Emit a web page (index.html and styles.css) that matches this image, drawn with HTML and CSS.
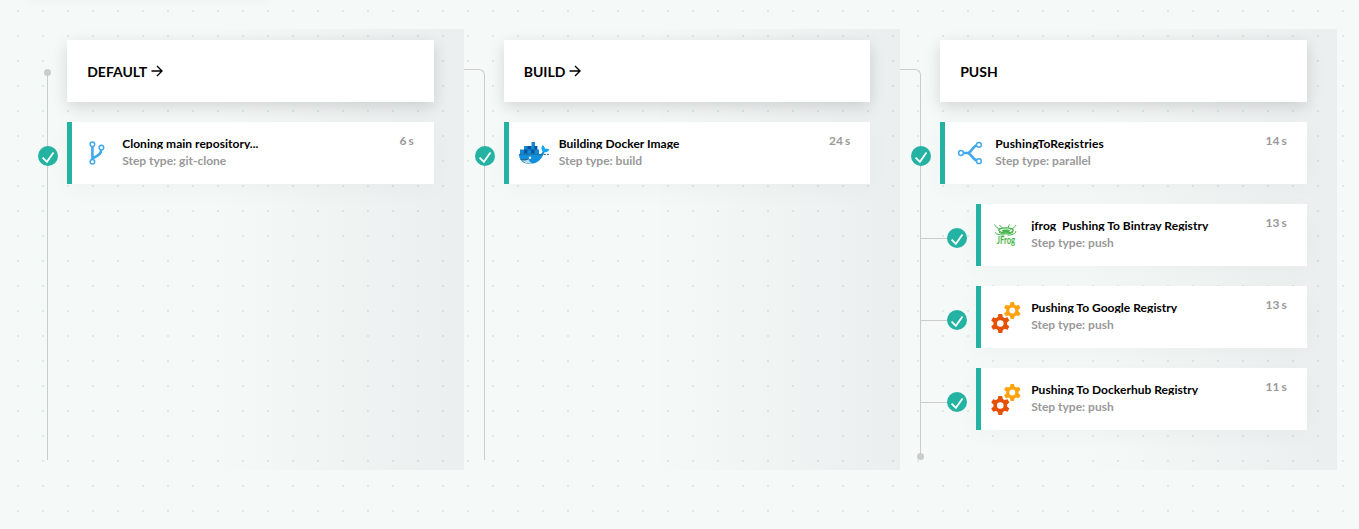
FILE: index.html
```html
<!DOCTYPE html>
<html lang="en">
<head>
<meta charset="utf-8">
<title>Pipeline</title>
<link rel="stylesheet" href="styles.css">
</head>
<body>
<svg class="sprite" aria-hidden="true">
  <symbol id="check" viewBox="0 0 20 20"><circle cx="10" cy="10" r="10" fill="#24b3a3"/><path d="M4.600 11.600l4.300 4.200L15.500 6.600" fill="none" stroke="#fff" stroke-width="1.800"/></symbol>
  <symbol id="arrow" viewBox="0 0 12 12"><path d="M.5 6h10M6 1l5 5-5 5" fill="none" stroke="#000" stroke-width="1.4"/></symbol>
  <symbol id="git" viewBox="0 0 32 32"><g fill="none" stroke="#42a9ee"><path d="M11.400 9.500v13M20.200 13c-.3 5-4 5.500-8.600 8.600" stroke-width="2.600"/><g stroke-width="1.500" fill="#fff"><circle cx="11.400" cy="7.300" r="2.300"/><circle cx="11.400" cy="24.700" r="2.300"/><circle cx="20.400" cy="10.600" r="2.300"/></g></g></symbol>
  <symbol id="parallel" viewBox="0 0 32 32"><g fill="none" stroke="#42a9ee"><path d="M9 16h5M24 8c-6 1-6.500 8-10.500 8 4 0 4.500 7 10.500 8" stroke-width="2.500"/><g stroke-width="1.500" fill="#fff"><circle cx="7" cy="16" r="2.400"/><circle cx="24.900" cy="7.800" r="2.400"/><circle cx="24.900" cy="24.200" r="2.400"/></g></g></symbol>
  <symbol id="docker" viewBox="0 0 32 32">
    <path d="M1 17h22c1.200-.6 1.500-2 1.700-3.200-1.500-1.500-1.300-4-.2-5.700 1.700 1.200 2.400 2.600 2.300 3.900 1.500-.5 3.100-.2 4.200.3-.8 2-2.500 2.700-4.700 2.800C24.300 22 19.500 27 12 27 5 27 1 23 1 17z" fill="#0f8fdc"/>
    <path d="M24.500 9.100c1.700 1.200 2.400 2.600 2.300 3.400 1.500-.5 3.100-.2 4.200.3-.8 2-2.500 2.700-4.700 2.800l-1.600-1.300c-1.500-1.500-1.300-3.500-.2-5.200z" fill="#12a9f5"/>
    <path d="M2 12.500h19V17H2zM6 9h13.500v3.500H6zM13.500 5H17v4h-3.500z" fill="#1488d0"/>
    <path d="M6 12.500h3.500v4H6zM13 12.500h3.500v4H13zM9.500 9H13v3.500H9.500zM16.500 9H19v3.500h-2.500z" fill="#07569d"/>
    <path d="M1 17.400h30" stroke="#2b688c" stroke-width="1" stroke-dasharray="2.500 1"/>
    <path d="M3.500 23c3 .6 5.500.3 7.500-1-.2 2.500 1.500 3.800 4.300 4.400-5 .8-9.200-.3-11.800-3.400z" fill="#bcd9e8"/>
    <path d="M2.500 22.500c3 .8 6.500.4 9-1.200" fill="none" stroke="#315a73" stroke-width="1"/>
    <circle cx="12" cy="20.700" r="1.300" fill="#e8f4fa"/>
  </symbol>
  <symbol id="frog" viewBox="0 0 32 32">
    <g fill="none" stroke="#43b649" stroke-width="1"><path d="M4.500 5.500c1.500 2.500 3 4 6 4.700M26 6c-1.500 2.500-3 3.800-6 4.200M9.500 6l2.500 2.800M19.500 5.500L18 8.500"/><ellipse cx="16" cy="11.300" rx="7.200" ry="2.500" stroke-width="1.300"/><path d="M9 13.300c3 2.200 11 2.200 14 0M5.500 13c-1.500 1.500 4 3.200 9 3M25.500 12c1.500 2-3 4-8 4.200"/></g>
    <path d="M11.500 11.500c2-1.500 7-1.500 9 0-1.500 2.500-7.500 2.500-9 0z" fill="#43b649"/>
    <text x="6.800" y="25" class="frog-word" textLength="18.200" lengthAdjust="spacingAndGlyphs">JFrog</text>
  </symbol>
  <symbol id="gear" viewBox="-10 -10 20 20">
    <circle r="5.100" fill="none" stroke="currentColor" stroke-width="3.600"/>
    <g fill="currentColor"><path id="teeth" d="M-2.600-6L-1.900-9.400H1.900L2.600-6zM-2.600 6L-1.900 9.400H1.900L2.600 6z"/><use href="#teeth" transform="rotate(60)"/><use href="#teeth" transform="rotate(120)"/></g>
  </symbol>
  <symbol id="gears" viewBox="0 0 32 34"><use href="#gear" class="gear-amber" x="13.300" y=".500" width="18" height="18"/><use href="#gear" class="gear-red" x=".300" y="12.500" width="20" height="20"/></symbol>
</svg>

<div class="top-panel"></div>
<main class="pipeline">
  <section class="stage stage-first">
    <header class="stage-head">DEFAULT<svg class="arrow"><use href="#arrow"/></svg></header>
    <article class="step">
      <svg class="status"><use href="#check"/></svg>
      <svg class="icon"><use href="#git"/></svg>
      <div class="info"><div class="name">Cloning main repository...</div><div class="type">Step type: git-clone</div></div>
      <div class="time">6 s</div>
    </article>
  </section>
  <section class="stage">
    <header class="stage-head">BUILD<svg class="arrow"><use href="#arrow"/></svg></header>
    <article class="step">
      <svg class="status"><use href="#check"/></svg>
      <svg class="icon"><use href="#docker"/></svg>
      <div class="info"><div class="name">Building Docker Image</div><div class="type">Step type: build</div></div>
      <div class="time">24 s</div>
    </article>
  </section>
  <section class="stage stage-last">
    <header class="stage-head">PUSH</header>
    <article class="step">
      <svg class="status"><use href="#check"/></svg>
      <svg class="icon"><use href="#parallel"/></svg>
      <div class="info"><div class="name name-wide">PushingToRegistries</div><div class="type">Step type: parallel</div></div>
      <div class="time">14 s</div>
    </article>
    <article class="step child">
      <svg class="status"><use href="#check"/></svg>
      <svg class="icon"><use href="#frog"/></svg>
      <div class="info"><div class="name">jfrog&nbsp; Pushing To Bintray Registry</div><div class="type">Step type: push</div></div>
      <div class="time">13 s</div>
    </article>
    <article class="step child">
      <svg class="status"><use href="#check"/></svg>
      <svg class="icon icon-tall"><use href="#gears"/></svg>
      <div class="info"><div class="name">Pushing To Google Registry</div><div class="type">Step type: push</div></div>
      <div class="time">13 s</div>
    </article>
    <article class="step child">
      <svg class="status"><use href="#check"/></svg>
      <svg class="icon icon-tall"><use href="#gears"/></svg>
      <div class="info"><div class="name">Pushing To Dockerhub Registry</div><div class="type">Step type: push</div></div>
      <div class="time">11 s</div>
    </article>
  </section>
</main>
</body>
</html>
```

FILE: styles.css
```css
* { box-sizing: border-box; }
body {
  margin: 0;
  height: 529px;
  overflow: hidden;
  font-family: Lato, sans-serif;
  background: conic-gradient(from 270deg at 2px 2px, #dcebe6 90deg, transparent 0) 17px 10px / 25px 25px #f5f9f8;
}
.sprite { position: absolute; width: 0; height: 0; }
.top-panel {
  position: absolute;
  top: -20px;
  left: 27px;
  width: 243px;
  height: 18px;
  box-shadow: 0 0 12px rgba(0, 0, 0, .05);
}
.pipeline {
  display: grid;
  grid-template-columns: repeat(3, 436.5px);
  height: 441px;
  margin: 29px 0 0 27.2px;
}
.stage {
  position: relative;
  display: flex;
  flex-direction: column;
  gap: 20px;
  padding: 11px 30px 0 40px;
  background: linear-gradient(to right, transparent 42%, rgba(0, 6, 20, .044));
}
.stage::before {
  content: "";
  position: absolute;
  top: 40px;
  bottom: 10px;
  left: 0;
  width: 20.5px;
  border: solid #ccc;
  border-width: 1px 1px 0 0;
  border-top-right-radius: 6px;
}
.stage-first::before { top: 43px; width: 20px; border-top: 0; border-radius: 0; }
.stage-last::before { bottom: 14px; width: 20px; }
.stage-first::after, .stage-last::after {
  content: "";
  position: absolute;
  left: 17px;
  width: 7px;
  height: 7px;
  border-radius: 50%;
  background: #ccc;
}
.stage-first::after { top: 40px; }
.stage-last::after { bottom: 10px; }
.stage-head {
  display: flex;
  align-items: center;
  gap: 4px;
  height: 62px;
  padding: 0 20px;
  background: #fff;
  box-shadow: 0 5px 15px rgba(0, 0, 0, .14);
  font-size: 14px;
  font-weight: 700;
  color: #000;
}
.arrow { width: 12px; height: 12px; }
.step {
  position: relative;
  display: flex;
  height: 62px;
  padding: 14px 20px 0 14px;
  border-left: 5px solid #24b3a3;
  background: #fff;
  box-shadow: 0 5px 25px rgba(0, 0, 0, .03);
}
.child { margin-left: 36px; }
.child::before {
  content: "";
  position: absolute;
  top: 34px;
  left: -60px;
  width: 27px;
  height: 1px;
  background: #ccc;
}
.status { position: absolute; top: 24px; left: -34px; width: 20px; height: 20px; }
.icon { width: 32px; height: 32px; margin: 1px 0 0 -5px; }
.icon-tall { height: 34px; }
.info { flex: 1; margin-left: 9px; font-size: 12px; font-weight: 700; white-space: nowrap; }
.name { height: 13px; line-height: 15px; overflow: hidden; letter-spacing: .03px; color: #000; }
.name-wide { letter-spacing: .16px; }
.type { margin-top: 4px; line-height: 15px; color: #999; }
.time { height: 15px; margin-top: -3px; font-size: 12px; line-height: 15px; font-weight: 700; word-spacing: -1px; color: #999; }
.gear-amber { color: #ffa20d; }
.gear-red { color: #e65109; }
.frog-word { font: 700 10.5px Lato, sans-serif; fill: #43b649; }
```
